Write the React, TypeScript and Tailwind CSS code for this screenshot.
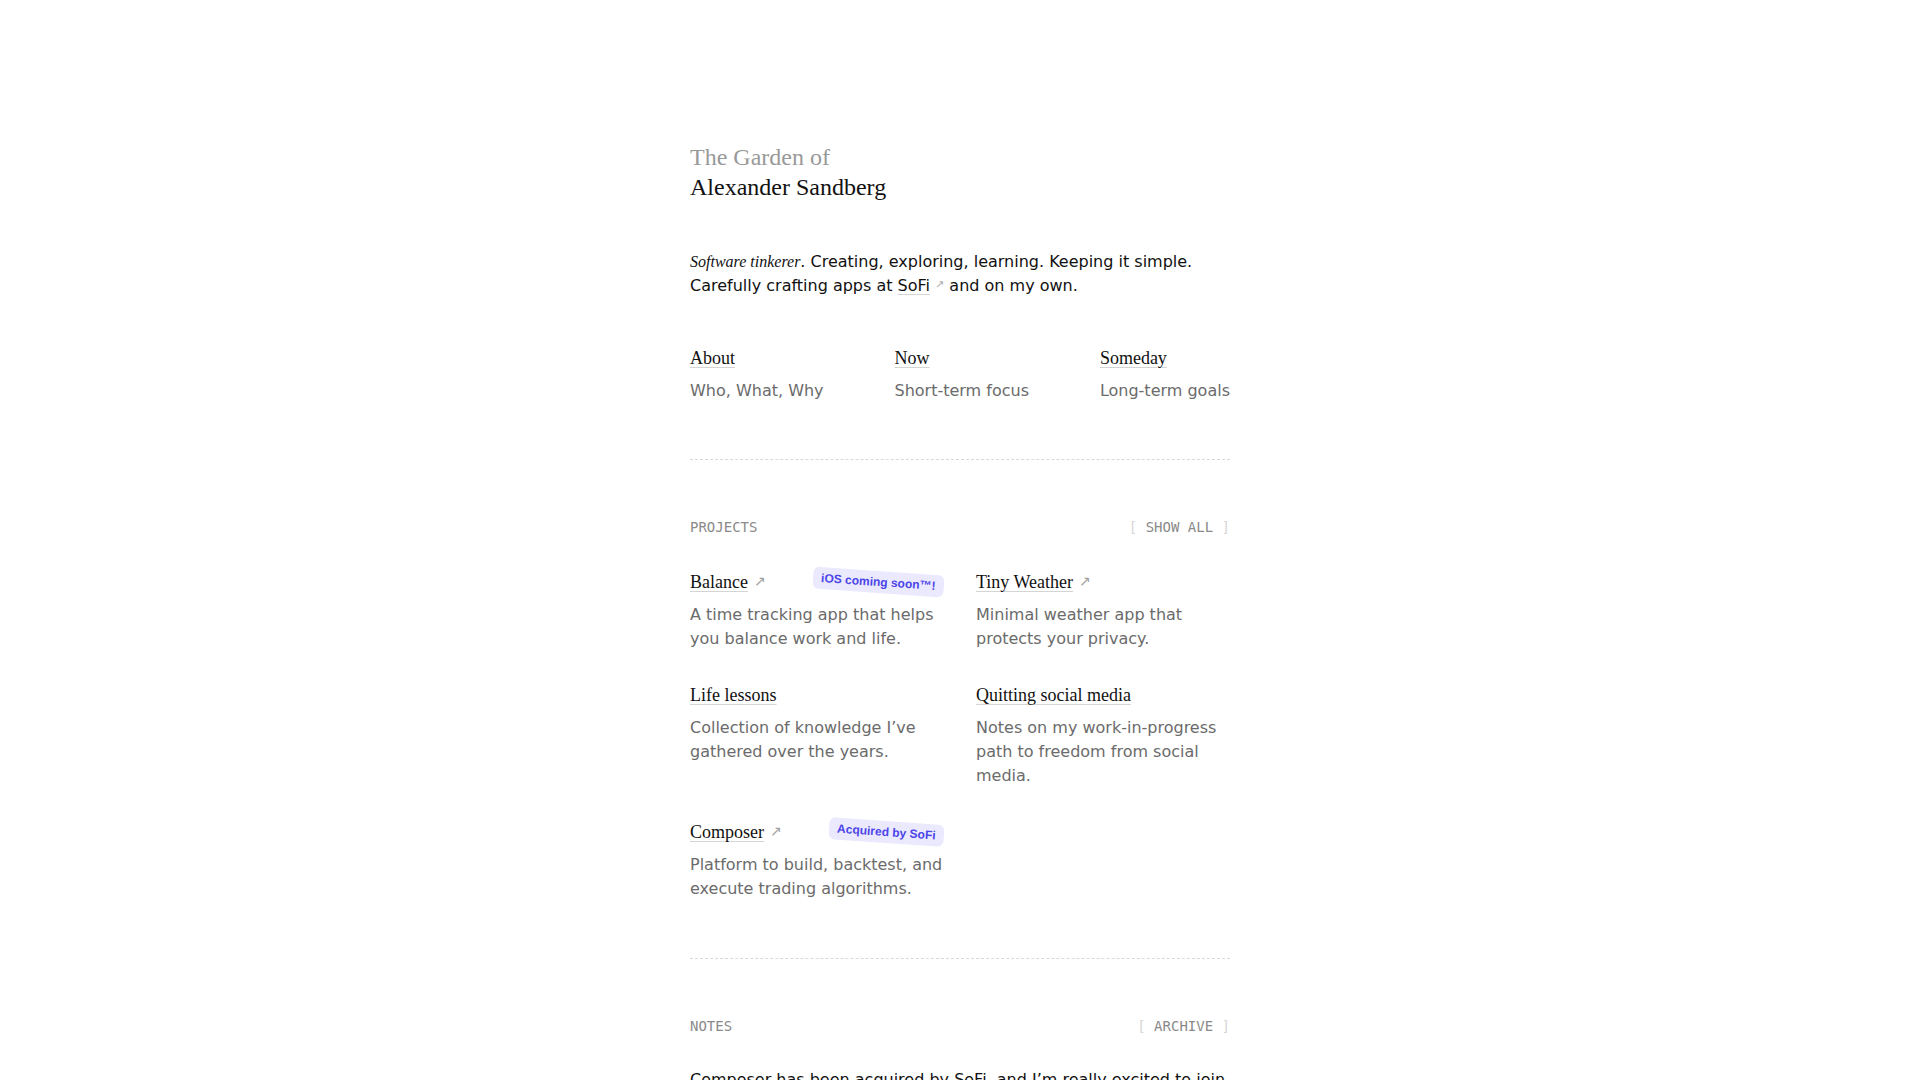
import React from "react";

type Project = {
  title: string;
  desc: string;
  external?: boolean;
  badge?: string;
};

const projects: Project[] = [
  {
    title: "Balance",
    desc: "A time tracking app that helps you balance work and life.",
    external: true,
    badge: "iOS coming soon™!",
  },
  {
    title: "Tiny Weather",
    desc: "Minimal weather app that protects your privacy.",
    external: true,
  },
  {
    title: "Life lessons",
    desc: "Collection of knowledge I’ve gathered over the years.",
  },
  {
    title: "Quitting social media",
    desc: "Notes on my work-in-progress path to freedom from social media.",
  },
  {
    title: "Composer",
    desc: "Platform to build, backtest, and execute trading algorithms.",
    external: true,
    badge: "Acquired by SoFi",
  },
];

const pages = [
  { title: "About", desc: "Who, What, Why" },
  { title: "Now", desc: "Short-term focus" },
  { title: "Someday", desc: "Long-term goals" },
];

function SectionHeader({ label, action }: { label: string; action: string }) {
  return (
    <div className="flex items-center justify-between font-['DejaVu_Sans_Mono',monospace] text-[14px] leading-5 text-[#8a8a8a]">
      <span>{label}</span>
      <a href="#" className="whitespace-pre">
        <span className="text-[#d6d6d6]">[</span> {action} <span className="text-[#d6d6d6]">]</span>
      </a>
    </div>
  );
}

function ProjectCard({ p }: { p: Project }) {
  return (
    <div>
      <div className="flex h-6 items-center justify-between">
        <div className="flex items-center">
          <a
            href="#"
            className="font-['Liberation_Serif',serif] text-[18px] leading-6 text-[#111] underline decoration-[#d4d4d4] decoration-1 underline-offset-[3px]"
          >
            {p.title}
          </a>
          {p.external && (
            <span className="mb-[2px] ml-[6px] text-[14px] leading-none text-[#a3a3a3]">↗</span>
          )}
        </div>
        {p.badge && (
          <span className="rotate-[4deg] rounded-md bg-[#ebe9fe] px-2 py-[3px] font-['Liberation_Sans',Arial,sans-serif] text-[12px] font-bold leading-4 text-[#4b45e8]">
            {p.badge}
          </span>
        )}
      </div>
      <p className="mt-[9px] text-[#6b6b6b]">{p.desc}</p>
    </div>
  );
}

export default function App() {
  return (
    <div className="min-h-screen bg-white font-['DejaVu_Sans',sans-serif] text-[16px] leading-6 text-[#111]">
      <main className="mx-auto w-[540px] pt-[142px] pb-24">
        <header className="font-['Liberation_Serif',serif] text-[24px] leading-[30px]">
          <div className="text-[#999]">The Garden of</div>
          <h1 className="text-[#111]">Alexander Sandberg</h1>
        </header>

        <p className="mt-12">
          <em className="font-['Liberation_Serif',serif]">Software tinkerer</em>. Creating, exploring,
          learning. Keeping it simple. Carefully crafting apps at{" "}
          <a href="#" className="underline decoration-[#d4d4d4] decoration-1 underline-offset-[3px]">
            SoFi
          </a>
          <span className="ml-[5px] align-[3px] text-[11px] leading-none text-[#b0b0b0]">↗</span> and
          on my own.
        </p>

        <nav className="mt-[48px] flex justify-between border-b border-dashed border-[#d9d9d9] pb-[56px]">
          {pages.map((pg) => (
            <div key={pg.title}>
              <a
                href="#"
                className="font-['Liberation_Serif',serif] text-[18px] leading-6 text-[#111] underline decoration-[#d4d4d4] decoration-1 underline-offset-[3px]"
              >
                {pg.title}
              </a>
              <div className="mt-2 text-[#6b6b6b]">{pg.desc}</div>
            </div>
          ))}
        </nav>

        <section className="border-b border-dashed border-[#d9d9d9] pt-[57px] pb-[57px]">
          <SectionHeader label="PROJECTS" action="SHOW ALL" />
          <div className="mt-[33px] grid grid-cols-2 gap-x-8 gap-y-8">
            {projects.map((p) => (
              <ProjectCard key={p.title} p={p} />
            ))}
          </div>
        </section>

        <section className="pt-[57px]">
          <SectionHeader label="NOTES" action="ARCHIVE" />
          <div className="mt-[32px]">
            <p>
              Composer has been acquired by SoFi, and I’m really excited to join the team and keep
              building tools that help people invest with confidence.
            </p>
          </div>
        </section>
      </main>
    </div>
  );
}
